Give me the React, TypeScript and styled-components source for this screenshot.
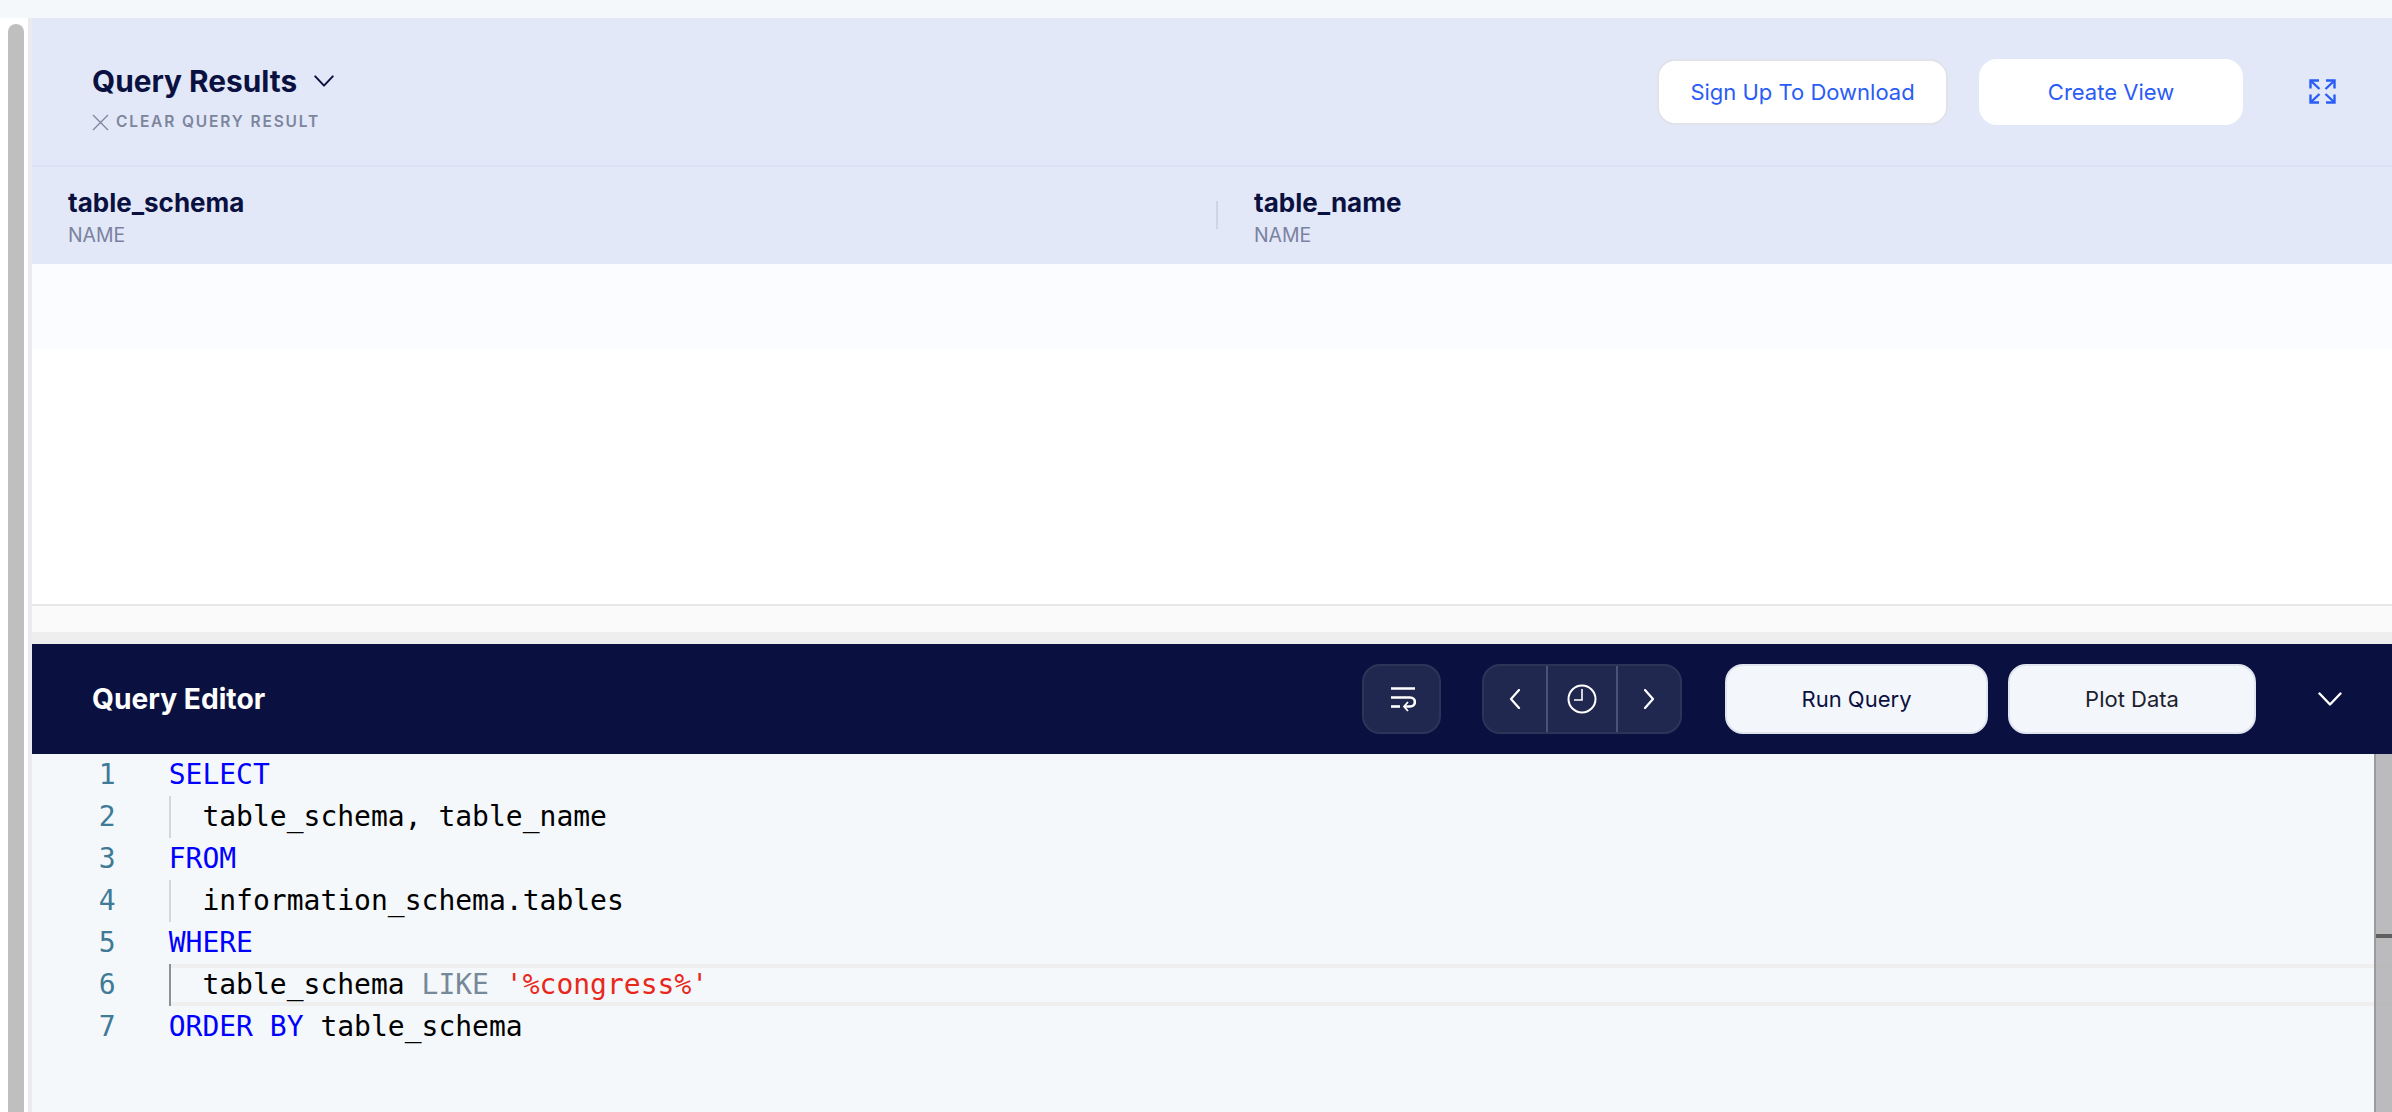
import React from 'react';
import styled, { createGlobalStyle } from 'styled-components';

const GlobalStyle = createGlobalStyle`
    html, body {
        margin: 0;
        padding: 0;
        width: 2392px;
        height: 1112px;
        overflow: hidden;
        background: #ffffff;
    }
    * {
        box-sizing: border-box;
    }
`;

const NAVY = '#0a1140';
const BLUE = '#2a5cf6';
const SANS = `Inter, "Noto Sans", sans-serif`;

const Page = styled.div`
    display: flex;
    flex-direction: column;
    width: 2392px;
    height: 1112px;
    font-family: ${SANS};
`;

const TopStrip = styled.div`
    flex: 0 0 18px;
    background: #f5f8fb;
`;

const Body = styled.div`
    flex: 1;
    display: flex;
    min-height: 0;
`;

const Gutter = styled.div`
    flex: 0 0 32px;
    padding: 6px 4px 0 8px;
    background: #ffffff;
    border-right: 4px solid #e9ebee;
`;

const GutterThumb = styled.div`
    width: 16px;
    height: 100%;
    background: #bfbfbf;
    border-radius: 8px 8px 0 0;
`;

const Main = styled.div`
    flex: 1;
    display: flex;
    flex-direction: column;
    min-width: 0;
`;

const ResultsHeader = styled.div`
    flex: 0 0 149px;
    display: flex;
    justify-content: space-between;
    padding: 41px 0 0 60px;
    background: #e2e8f8;
    border-bottom: 2px solid #dce2f3;
`;

const TitleBlock = styled.div`
    display: flex;
    flex-direction: column;
    gap: 16px;
    padding-top: 6px;
`;

const TitleRow = styled.div`
    display: flex;
    align-items: center;
    gap: 17px;
`;

const Title = styled.div`
    font-size: 29.8px;
    line-height: 32px;
    font-weight: 700;
    color: ${NAVY};
`;

const ClearRow = styled.div`
    display: flex;
    align-items: center;
    gap: 7px;
    font-size: 15.5px;
    line-height: 18px;
    font-weight: 600;
    letter-spacing: 1.85px;
    color: #7c859c;
`;

const Actions = styled.div`
    display: flex;
    align-items: flex-start;
`;

const LightButton = styled.button<{ $width: number; $gap: number; $ghost?: boolean }>`
    width: ${(p) => p.$width}px;
    height: 66px;
    margin-right: ${(p) => p.$gap}px;
    padding: 0;
    border: 2px solid ${(p) => (p.$ghost ? '#ffffff' : '#e0e3ea')};
    border-radius: 18px;
    background: #ffffff;
    color: ${BLUE};
    font-family: ${SANS};
    font-size: 22px;
    font-weight: 400;
    white-space: nowrap;
`;

const ExpandButton = styled.div`
    display: flex;
    margin: 20px 56px 0 0;
`;

const ColumnHeader = styled.div`
    flex: 0 0 97px;
    display: grid;
    grid-template-columns: 1184px 1fr;
    background: #e2e8f8;
`;

const ColumnCell = styled.div<{ $divided?: boolean }>`
    display: flex;
    flex-direction: column;
    padding: 21px 0 0 ${(p) => (p.$divided ? 38 : 36)}px;
    position: relative;
`;

const ColumnDivider = styled.div`
    position: absolute;
    left: 0;
    top: 34px;
    width: 2px;
    height: 28px;
    background: #cfd5e6;
`;

const ColumnName = styled.div`
    font-size: 26px;
    line-height: 30px;
    font-weight: 700;
    color: ${NAVY};
`;

const ColumnType = styled.div`
    font-size: 19.4px;
    line-height: 28px;
    margin-top: 3px;
    color: #7b829f;
`;

const EmptyRow = styled.div`
    flex: 0 0 85px;
    background: #fbfcff;
`;

const ResultsBody = styled.div`
    flex: 0 0 257px;
    background: #ffffff;
    border-bottom: 2px solid #e8e8e8;
`;

const SplitHandle = styled.div`
    flex: 0 0 38px;
    background: #fafafa;
    border-bottom: 12px solid #eeeeee;
`;

const EditorBar = styled.div`
    flex: 0 0 110px;
    display: flex;
    align-items: center;
    padding: 0 50px 0 60px;
    background: ${NAVY};
`;

const EditorTitle = styled.div`
    flex: 1;
    font-size: 28.2px;
    font-weight: 700;
    color: #ffffff;
`;

const GlassButton = styled.div`
    display: flex;
    align-items: center;
    justify-content: center;
    width: 79px;
    height: 70px;
    margin-right: 41px;
    padding-left: 3px;
    background: #212850;
    border: 2px solid #2d3458;
    border-radius: 18px;
`;

const HistoryGroup = styled.div`
    display: flex;
    width: 200px;
    height: 70px;
    margin-right: 43px;
    background: #212850;
    border: 2px solid #2d3458;
    border-radius: 18px;
    overflow: hidden;
`;

const HistorySlot = styled.div<{ $grow?: number; $divided?: boolean }>`
    flex: 0 0 ${(p) => p.$grow}px;
    display: flex;
    align-items: center;
    justify-content: center;
    border-left: ${(p) => (p.$divided ? '2px solid #4b5276' : 'none')};
`;

const DarkBarButton = styled.button<{ $width: number; $gap: number; $ink: string }>`
    width: ${(p) => p.$width}px;
    height: 70px;
    margin-right: ${(p) => p.$gap}px;
    padding: 0;
    background: #f3f6fb;
    border: 2px solid #dfe4ee;
    border-radius: 18px;
    color: ${(p) => p.$ink};
    font-family: ${SANS};
    font-size: 22px;
    font-weight: 400;
`;

const Editor = styled.div`
    flex: 1;
    position: relative;
    display: flex;
    min-height: 0;
    background: #f4f8fb;
    overflow: hidden;
    font-family: "DejaVu Sans Mono", "Liberation Mono", monospace;
    font-size: 28px;
    line-height: 42px;
`;

const LineNumbers = styled.div`
    flex: 0 0 136.7px;
    display: flex;
    flex-direction: column;
    padding-right: 53px;
    text-align: right;
    color: #3f7a96;
`;

const Lines = styled.div`
    flex: 1;
    display: flex;
    flex-direction: column;
`;

const CodeLine = styled.div<{ $active?: boolean }>`
    height: 42px;
    white-space: pre;
    color: #000000;
    ${(p) => p.$active && 'box-shadow: inset 0 4px 0 #efefef, inset 0 -4px 0 #efefef;'}
`;

const Indent = styled.span<{ $active?: boolean }>`
    display: inline-block;
    width: 33.7px;
    height: 42px;
    vertical-align: top;
    border-left: 2px solid ${(p) => (p.$active ? '#8f9094' : '#d6d6d6')};
`;

const Keyword = styled.span`
    color: #0000ff;
`;

const Operator = styled.span`
    color: #778899;
`;

const Str = styled.span`
    color: #e8281c;
`;

const OverviewRuler = styled.div`
    position: absolute;
    top: 0;
    right: 0;
    bottom: 0;
    width: 18px;
    background: rgba(176, 176, 178, 0.85);
    border-left: 2px solid #9b9b9d;
`;

const RulerMark = styled.div`
    position: absolute;
    top: 180px;
    left: 0;
    right: 0;
    height: 4px;
    background: #5f5f5f;
`;

const Chevron = ({ width, color }: { width: number; color: string }) => (
    <svg width={width} height={width / 2 + 2} viewBox="0 0 24 14" fill="none" stroke={color} strokeWidth="2.4" strokeLinecap="round" strokeLinejoin="round">
        <path d="M1.5 1.5 12 12.5 22.5 1.5" />
    </svg>
);

const CloseIcon = () => (
    <svg width="17" height="17" viewBox="0 0 17 17" fill="none" stroke="#7c859c" strokeWidth="1.3">
        <path d="M1 1 16 16M16 1 1 16" />
    </svg>
);

const ExpandIcon = () => (
    <svg width="27" height="25" viewBox="0 0 27 25" fill="none" stroke={BLUE} strokeWidth="2.4">
        <path d="M1.5 9.5V1.5H10M17 1.5H25.5V9.5M1.5 15.5V23.5H10M17 23.5H25.5V15.5" />
        <path d="M2 2 10.5 10M25 2 16.5 10M2 23 10.5 15M25 23 16.5 15" />
    </svg>
);

const WrapIcon = () => (
    <svg width="26" height="26" viewBox="0 0 26 26" fill="none" stroke="#ffffff" strokeWidth="2.6">
        <path d="M1 2.5H25M1 11.5H20C26.5 11.5 26.5 20.5 20 20.5H14" />
        <path d="M1 20.5H10" />
        <path d="M18 16 14 20.5 18 25" strokeWidth="1.8" />
    </svg>
);

const ClockIcon = () => (
    <svg width="30" height="30" viewBox="0 0 30 30" fill="none" stroke="#ffffff" strokeWidth="2">
        <circle cx="15" cy="15" r="13.5" />
        <path d="M15 5V16H7" strokeWidth="1.6" />
    </svg>
);

const SideChevron = ({ flip }: { flip?: boolean }) => (
    <svg width="12" height="20" viewBox="0 0 12 20" fill="none" stroke="#ffffff" strokeWidth="2.2" strokeLinecap="round" strokeLinejoin="round">
        <path d={flip ? 'M2 1 10 10 2 19' : 'M10 1 2 10 10 19'} />
    </svg>
);

const SQL_LINE_COUNT = [1, 2, 3, 4, 5, 6, 7];

const App = () => (
    <Page>
        <GlobalStyle />
        <TopStrip />
        <Body>
            <Gutter>
                <GutterThumb />
            </Gutter>
            <Main>
                <ResultsHeader>
                    <TitleBlock>
                        <TitleRow>
                            <Title>Query Results</Title>
                            <Chevron width={20} color={NAVY} />
                        </TitleRow>
                        <ClearRow>
                            <CloseIcon />
                            CLEAR QUERY RESULT
                        </ClearRow>
                    </TitleBlock>
                    <Actions>
                        <LightButton $width={291} $gap={31}>Sign Up To Download</LightButton>
                        <LightButton $width={264} $gap={66} $ghost>Create View</LightButton>
                        <ExpandButton>
                            <ExpandIcon />
                        </ExpandButton>
                    </Actions>
                </ResultsHeader>
                <ColumnHeader>
                    <ColumnCell>
                        <ColumnName>table_schema</ColumnName>
                        <ColumnType>NAME</ColumnType>
                    </ColumnCell>
                    <ColumnCell $divided>
                        <ColumnDivider />
                        <ColumnName>table_name</ColumnName>
                        <ColumnType>NAME</ColumnType>
                    </ColumnCell>
                </ColumnHeader>
                <EmptyRow />
                <ResultsBody />
                <SplitHandle />
                <EditorBar>
                    <EditorTitle>Query Editor</EditorTitle>
                    <GlassButton>
                        <WrapIcon />
                    </GlassButton>
                    <HistoryGroup>
                        <HistorySlot $grow={62}>
                            <SideChevron />
                        </HistorySlot>
                        <HistorySlot $grow={70} $divided>
                            <ClockIcon />
                        </HistorySlot>
                        <HistorySlot $grow={64} $divided>
                            <SideChevron flip />
                        </HistorySlot>
                    </HistoryGroup>
                    <DarkBarButton $width={263} $gap={20} $ink={NAVY}>Run Query</DarkBarButton>
                    <DarkBarButton $width={248} $gap={62} $ink="#1c1f2e">Plot Data</DarkBarButton>
                    <Chevron width={24} color="#ffffff" />
                </EditorBar>
                <Editor>
                    <LineNumbers>
                        {SQL_LINE_COUNT.map((n) => (
                            <div key={n}>{n}</div>
                        ))}
                    </LineNumbers>
                    <Lines>
                        <CodeLine><Keyword>SELECT</Keyword></CodeLine>
                        <CodeLine><Indent />table_schema, table_name</CodeLine>
                        <CodeLine><Keyword>FROM</Keyword></CodeLine>
                        <CodeLine><Indent />information_schema.tables</CodeLine>
                        <CodeLine><Keyword>WHERE</Keyword></CodeLine>
                        <CodeLine $active>
                            <Indent $active />table_schema <Operator>LIKE</Operator> <Str>'%congress%'</Str>
                        </CodeLine>
                        <CodeLine><Keyword>ORDER BY</Keyword> table_schema</CodeLine>
                    </Lines>
                    <OverviewRuler>
                        <RulerMark />
                    </OverviewRuler>
                </Editor>
            </Main>
        </Body>
    </Page>
);

export default App;
